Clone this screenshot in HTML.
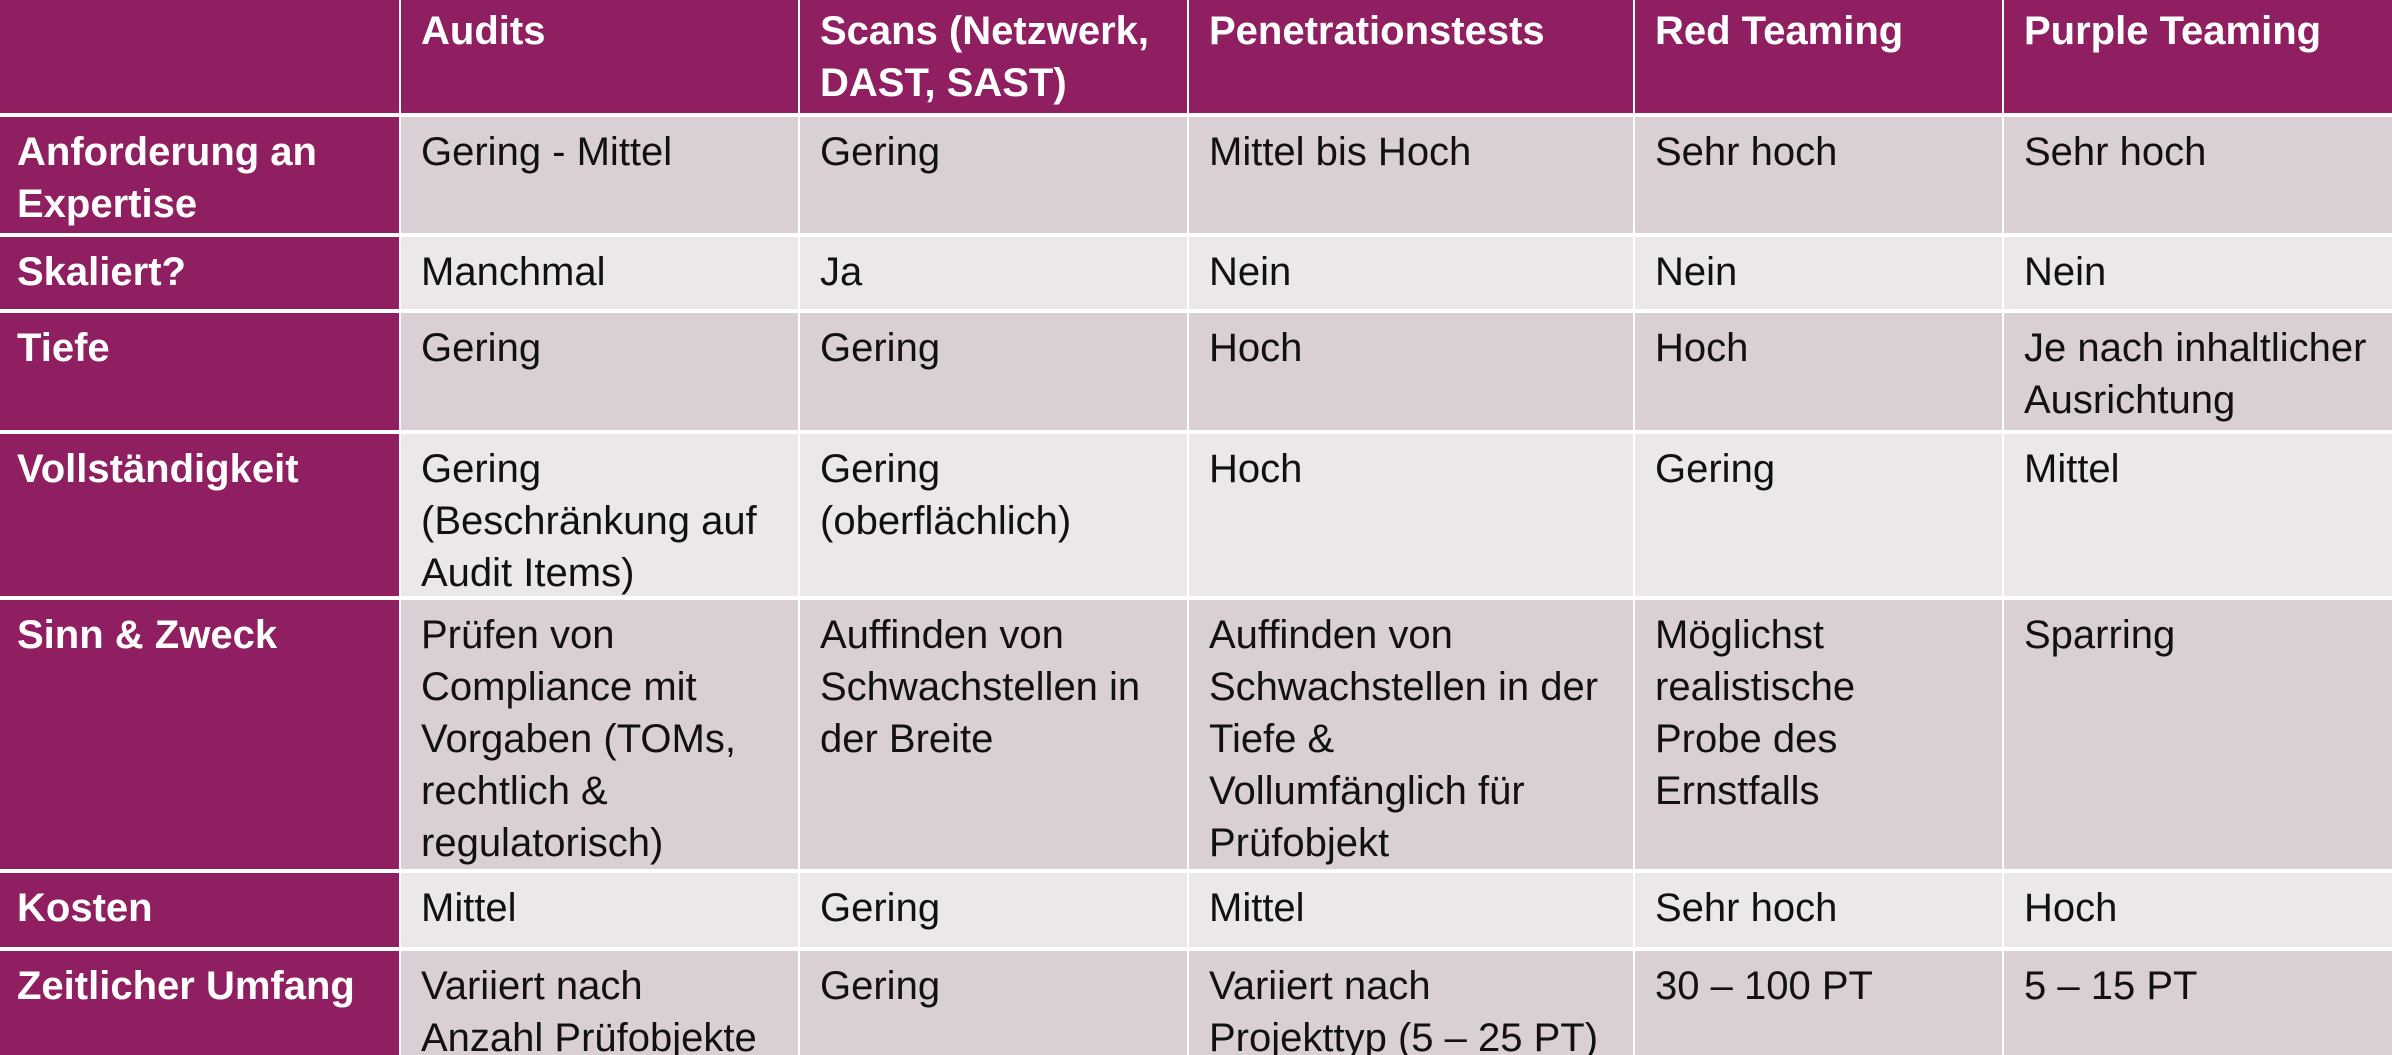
<!DOCTYPE html>
<html><head><meta charset="utf-8"><style>
html,body{margin:0;padding:0;background:#fff;width:2392px;height:1055px;overflow:hidden}
.g{display:grid;grid-template-columns:399px 397px 387px 444px 367px 388px;grid-template-rows:113px 116px 72px 117px 162px 269px 74px 104px;column-gap:2px;row-gap:4px;width:2392px;height:1055px;font-family:"Liberation Sans",Arial,sans-serif;font-size:40px;line-height:52px;letter-spacing:0}
.g>div{padding:9px 6px 0 20px;box-sizing:border-box;overflow:hidden;color:#111;white-space:nowrap}
.h{background:#8f1f60;color:#fff!important;font-weight:bold;padding-top:5px!important}
.f{background:#8f1f60;color:#fff!important;font-weight:bold;padding-left:17px!important}
.a{background:#d9cfd5}
.b{background:#ece8ea}
</style></head><body>
<div class="g">
<div class="h"></div><div class="h">Audits</div><div class="h">Scans (Netzwerk,<br>DAST, SAST)</div><div class="h">Penetrationstests</div><div class="h">Red Teaming</div><div class="h">Purple Teaming</div>

<div class="f">Anforderung an<br>Expertise</div><div class="a">Gering - Mittel</div><div class="a">Gering</div><div class="a">Mittel bis Hoch</div><div class="a">Sehr hoch</div><div class="a">Sehr hoch</div>

<div class="f">Skaliert?</div><div class="b">Manchmal</div><div class="b">Ja</div><div class="b">Nein</div><div class="b">Nein</div><div class="b">Nein</div>

<div class="f">Tiefe</div><div class="a">Gering</div><div class="a">Gering</div><div class="a">Hoch</div><div class="a">Hoch</div><div class="a">Je nach inhaltlicher<br>Ausrichtung</div>

<div class="f">Vollständigkeit</div><div class="b">Gering<br>(Beschränkung auf<br>Audit Items)</div><div class="b">Gering<br>(oberflächlich)</div><div class="b">Hoch</div><div class="b">Gering</div><div class="b">Mittel</div>

<div class="f">Sinn &amp; Zweck</div><div class="a">Prüfen von<br>Compliance mit<br>Vorgaben (TOMs,<br>rechtlich &amp;<br>regulatorisch)</div><div class="a">Auffinden von<br>Schwachstellen in<br>der Breite</div><div class="a">Auffinden von<br>Schwachstellen in der<br>Tiefe &amp;<br>Vollumfänglich für<br>Prüfobjekt</div><div class="a">Möglichst<br>realistische<br>Probe des<br>Ernstfalls</div><div class="a">Sparring</div>

<div class="f">Kosten</div><div class="b">Mittel</div><div class="b">Gering</div><div class="b">Mittel</div><div class="b">Sehr hoch</div><div class="b">Hoch</div>

<div class="f">Zeitlicher Umfang</div><div class="a">Variiert nach<br>Anzahl Prüfobjekte</div><div class="a">Gering</div><div class="a">Variiert nach<br>Projekttyp (5 – 25 PT)</div><div class="a">30 – 100 PT</div><div class="a">5 – 15 PT</div>
</div>
</body></html>
